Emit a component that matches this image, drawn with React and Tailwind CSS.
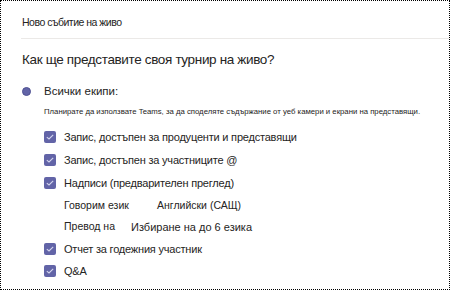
import React from "react";

const font = { fontFamily: '"Liberation Sans", Arial, sans-serif' };

function CheckBox() {
  return (
    <span className="w-[12px] h-[12px] rounded-[2px] bg-[#6264a7] flex items-center justify-center shrink-0">
      <svg width="8" height="6" viewBox="0 0 8 6" fill="none">
        <path d="M0.8 3.1 L3 5 L7.2 0.9" stroke="#d4d5ee" strokeWidth="1.1" />
      </svg>
    </span>
  );
}

function CheckRow({ label, h = "h-[23px]" }) {
  return (
    <div className={`flex items-center gap-[8px] pl-[43px] ${h}`}>
      <CheckBox />
      <span className="text-[11px] leading-[16px] tracking-[-0.2px] text-[#252423] whitespace-nowrap">
        {label}
      </span>
    </div>
  );
}

export default function App() {
  return (
    <div
      className="w-[450px] h-[290px] border border-dotted border-black bg-white overflow-hidden"
      style={font}
    >
      {/* header */}
      <div className="h-[37px] pt-[8px] pl-[21px]">
        <span className="text-[10.5px] leading-[16px] tracking-[-0.5px] text-[#252423]">Ново събитие на живо</span>
      </div>
      <div className="h-px ml-[20px] bg-[#ebe9e7]" />

      <h1 className="mt-[11px] pl-[21px] text-[13.5px] leading-[20px] tracking-[-0.35px] text-[#252423]">
        Как ще представите своя турнир на живо?
      </h1>

      <div className="mt-[13px] h-[16px] flex items-center">
        <span className="ml-[21px] w-[9px] h-[9px] rounded-full bg-[#6264a7] border border-[#4f5192]" />
        <span className="ml-[13px] text-[11.5px] leading-[16px] text-[#252423]">Всички екипи:</span>
      </div>

      <p className="mt-[7px] pl-[43px] text-[7.75px] leading-[12px] text-[#252423] whitespace-nowrap">
        Планирате да използвате Teams, за да споделяте съдържание от уеб камери и екрани на представящи.
      </p>

      <div className="mt-[7px]">
        <CheckRow label="Запис, достъпен за продуценти и представящи" />
        <CheckRow label="Запис, достъпен за участниците @" />
        <CheckRow label="Надписи (предварителен преглед)" />

        <div className="h-[23px] flex items-center pl-[63px] text-[10.5px] text-[#252423]">
          <span className="w-[93px]">Говорим език</span>
          <span>Английски (САЩ)</span>
        </div>
        <div className="h-[20px] flex items-center pl-[63px] text-[#252423]">
          <span className="w-[67px] text-[10.5px]">Превод на</span>
          <span className="text-[11px]">Избиране на до 6 езика</span>
        </div>

        <CheckRow label="Отчет за годежния участник" />
        <CheckRow label="Q&A" h="h-[21px]" />
      </div>
    </div>
  );
}
